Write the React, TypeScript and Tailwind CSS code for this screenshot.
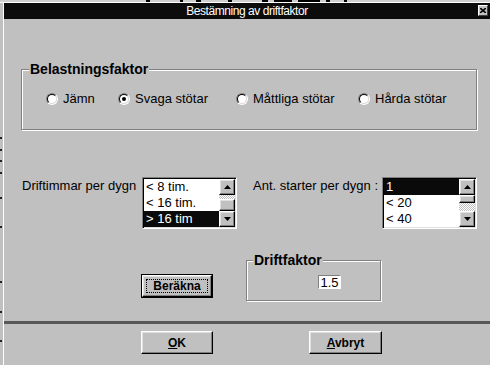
import React from 'react';

const raised =
  'border border-t-white border-l-white border-b-black border-r-black shadow-[inset_-1px_-1px_0_#808080,inset_1px_1px_0_#dfdfdf] bg-[#c0c0c0]';
const sunken =
  'border border-t-[#808080] border-l-[#808080] border-b-white border-r-white shadow-[inset_1px_1px_0_#000,inset_-1px_-1px_0_#dfdfdf]';
const etched = 'border border-[#808080] shadow-[1px_1px_0_#fff,inset_1px_1px_0_#fff]';

function Radio({ checked, label, w }: { checked?: boolean; label: string; w: string }) {
  return (
    <div className={`flex items-center gap-[5px] ${w}`}>
      <div className="w-[12px] h-[12px] rounded-full border border-t-[#808080] border-l-[#808080] border-b-white border-r-white shrink-0">
        <div className="w-full h-full rounded-full border border-t-black border-l-black border-b-[#dfdfdf] border-r-[#dfdfdf] bg-white flex items-center justify-center">
          {checked && <div className="w-[4px] h-[4px] rounded-full bg-black" />}
        </div>
      </div>
      <span className="leading-[15px]">{label}</span>
    </div>
  );
}

function Arrow({ up }: { up?: boolean }) {
  return (
    <div className={`${raised} w-[16px] h-[16px] flex items-center justify-center`}>
      <svg width="7" height="4" viewBox="0 0 7 4">
        {up ? <path d="M3.5 0 L7 4 L0 4 Z" fill="#000" /> : <path d="M0 0 L7 0 L3.5 4 Z" fill="#000" />}
      </svg>
    </div>
  );
}

function ListBox({ items, selected, track }: { items: string[]; selected: number; track: 'a' | 'b' }) {
  const checker = 'bg-[repeating-conic-gradient(#ffffff_0_25%,#c0c0c0_0_50%)] bg-[length:2px_2px]';
  return (
    <div className={`${sunken} w-[95px] h-[52px] bg-white flex p-[1px]`}>
      <div className="flex-1 flex flex-col">
        {items.map((it, i) => (
          <div
            key={i}
            className={`h-[16px] leading-[16px] pl-[2px] ${i === selected ? 'bg-[#0a0a0a] text-white' : 'text-black'}`}
          >
            {it}
          </div>
        ))}
      </div>
      <div className="w-[16px] flex flex-col">
        <Arrow up />
        {track === 'a' ? (
          <>
            <div className={`h-[4px] ${checker}`} />
            <div className={`${raised} h-[12px]`} />
          </>
        ) : (
          <>
            <div className={`${raised} h-[8px]`} />
            <div className={`h-[8px] ${checker}`} />
          </>
        )}
        <Arrow />
      </div>
    </div>
  );
}

export default function App() {
  return (
    <div className="w-[490px] h-[365px] overflow-hidden bg-[#c0c0c0] text-[13px] text-black font-['Liberation_Sans',Arial,sans-serif] flex flex-col">
      <svg width="490" height="3" className="block shrink-0">
        <rect width="490" height="3" fill="#cfcfcf" />
        <rect x="146" y="0" width="4" height="2" fill="#000" />
        <rect x="180" y="0" width="3" height="2" fill="#000" />
        <rect x="196" y="0" width="5" height="2" fill="#000" />
        <rect x="228" y="0" width="4" height="2" fill="#000" />
        <rect x="262" y="0" width="6" height="2" fill="#000" />
        <rect x="274" y="0" width="18" height="2" fill="#000" />
        <rect x="298" y="0" width="22" height="2" fill="#000" />
        <rect x="326" y="0" width="4" height="2" fill="#000" />
        <rect x="344" y="0" width="3" height="2" fill="#000" />
        <rect x="0" y="2" width="490" height="1" fill="#fff" />
      </svg>
      <div className="flex flex-1">
        <svg width="3" height="362" className="block shrink-0">
          <rect width="3" height="362" fill="#c0c0c0" />
          {[137, 149, 160, 172, 197, 226, 281, 311, 340].map((y) => (
            <rect key={y} x="0" y={y - 3} width="2" height="2" fill="#222" />
          ))}
        </svg>
        <div className="flex-1 border-l border-white flex flex-col">
          <div className="h-[16px] bg-[#0c0c0c] flex items-center relative shrink-0">
            <div className="flex-1 text-center text-white text-[12px] leading-[16px] tracking-[-0.45px] font-['Liberation_Sans_Narrow','Liberation_Sans',sans-serif]">
              Bestämning av driftfaktor
            </div>
            <div className="absolute right-[2px] top-[2px] w-[10px] h-[11px] bg-[#c0c0c0] border border-t-white border-l-white border-b-[#404040] border-r-[#404040] flex items-center justify-center">
              <svg width="6" height="5" viewBox="0 0 6 5">
                <path d="M0 0 L6 5 M6 0 L0 5" stroke="#000" strokeWidth="1.6" />
              </svg>
            </div>
          </div>

          {/* Belastningsfaktor */}
          <div className={`relative ${etched} mt-[50px] ml-[17px] w-[456px] h-[61px] shrink-0`}>
            <div className="absolute left-[7px] top-[-9px] px-[1px] bg-[#c0c0c0] font-bold text-[14px] leading-[16px]">
              Belastningsfaktor
            </div>
            <div className="flex pt-[21px] pl-[24px]">
              <Radio label="Jämn" w="w-[72px]" />
              <Radio label="Svaga stötar" checked w="w-[118px]" />
              <Radio label="Måttliga stötar" w="w-[122px]" />
              <Radio label="Hårda stötar" w="w-[100px]" />
            </div>
          </div>

          {/* list row */}
          <div className="flex items-start mt-[47px] shrink-0">
            <div className="ml-[18px] w-[120px] pt-[1px] leading-[16px]">Driftimmar per dygn</div>
            <ListBox items={['< 8 tim.', '< 16 tim.', '> 16 tim']} selected={2} track="a" />
            <div className="ml-[16px] w-[129px] pt-[1px] leading-[16px]">Ant. starter per dygn :</div>
            <ListBox items={['1', '< 20', '< 40']} selected={0} track="b" />
          </div>

          {/* Beräkna + Driftfaktor */}
          <div className="flex items-start mt-[31px] shrink-0">
            <div className="ml-[137px] mt-[14px] w-[72px] h-[24px] border border-black">
              <div className={`${raised} w-full h-full flex items-center justify-center p-[3px]`}>
                <div className="w-full h-full border border-dotted border-black flex items-center justify-center font-bold text-[12px]">
                  Beräkna
                </div>
              </div>
            </div>
            <div className={`relative ${etched} ml-[33px] w-[135px] h-[41px]`}>
              <div className="absolute left-[6px] top-[-9px] px-[1px] bg-[#c0c0c0] font-bold text-[14px] leading-[16px]">
                Driftfaktor
              </div>
              <div className="mt-[14px] ml-[71px] w-[23px] h-[14px] bg-white border border-t-[#808080] border-l-[#808080] border-b-white border-r-white flex items-center justify-center leading-[13px]">
                1.5
              </div>
            </div>
          </div>

          <div className="mt-[20px] h-[3px] bg-[#585858] shrink-0" />

          <div className="flex mt-[7px] shrink-0">
            <div className={`${raised} ml-[137px] w-[72px] h-[23px] flex items-center justify-center font-bold text-[12px]`}>
              <span><span className="underline">O</span>K</span>
            </div>
            <div className={`${raised} ml-[96px] w-[73px] h-[23px] flex items-center justify-center font-bold text-[12px]`}>
              <span><span className="underline">A</span>vbryt</span>
            </div>
          </div>
        </div>
      </div>
    </div>
  );
}
